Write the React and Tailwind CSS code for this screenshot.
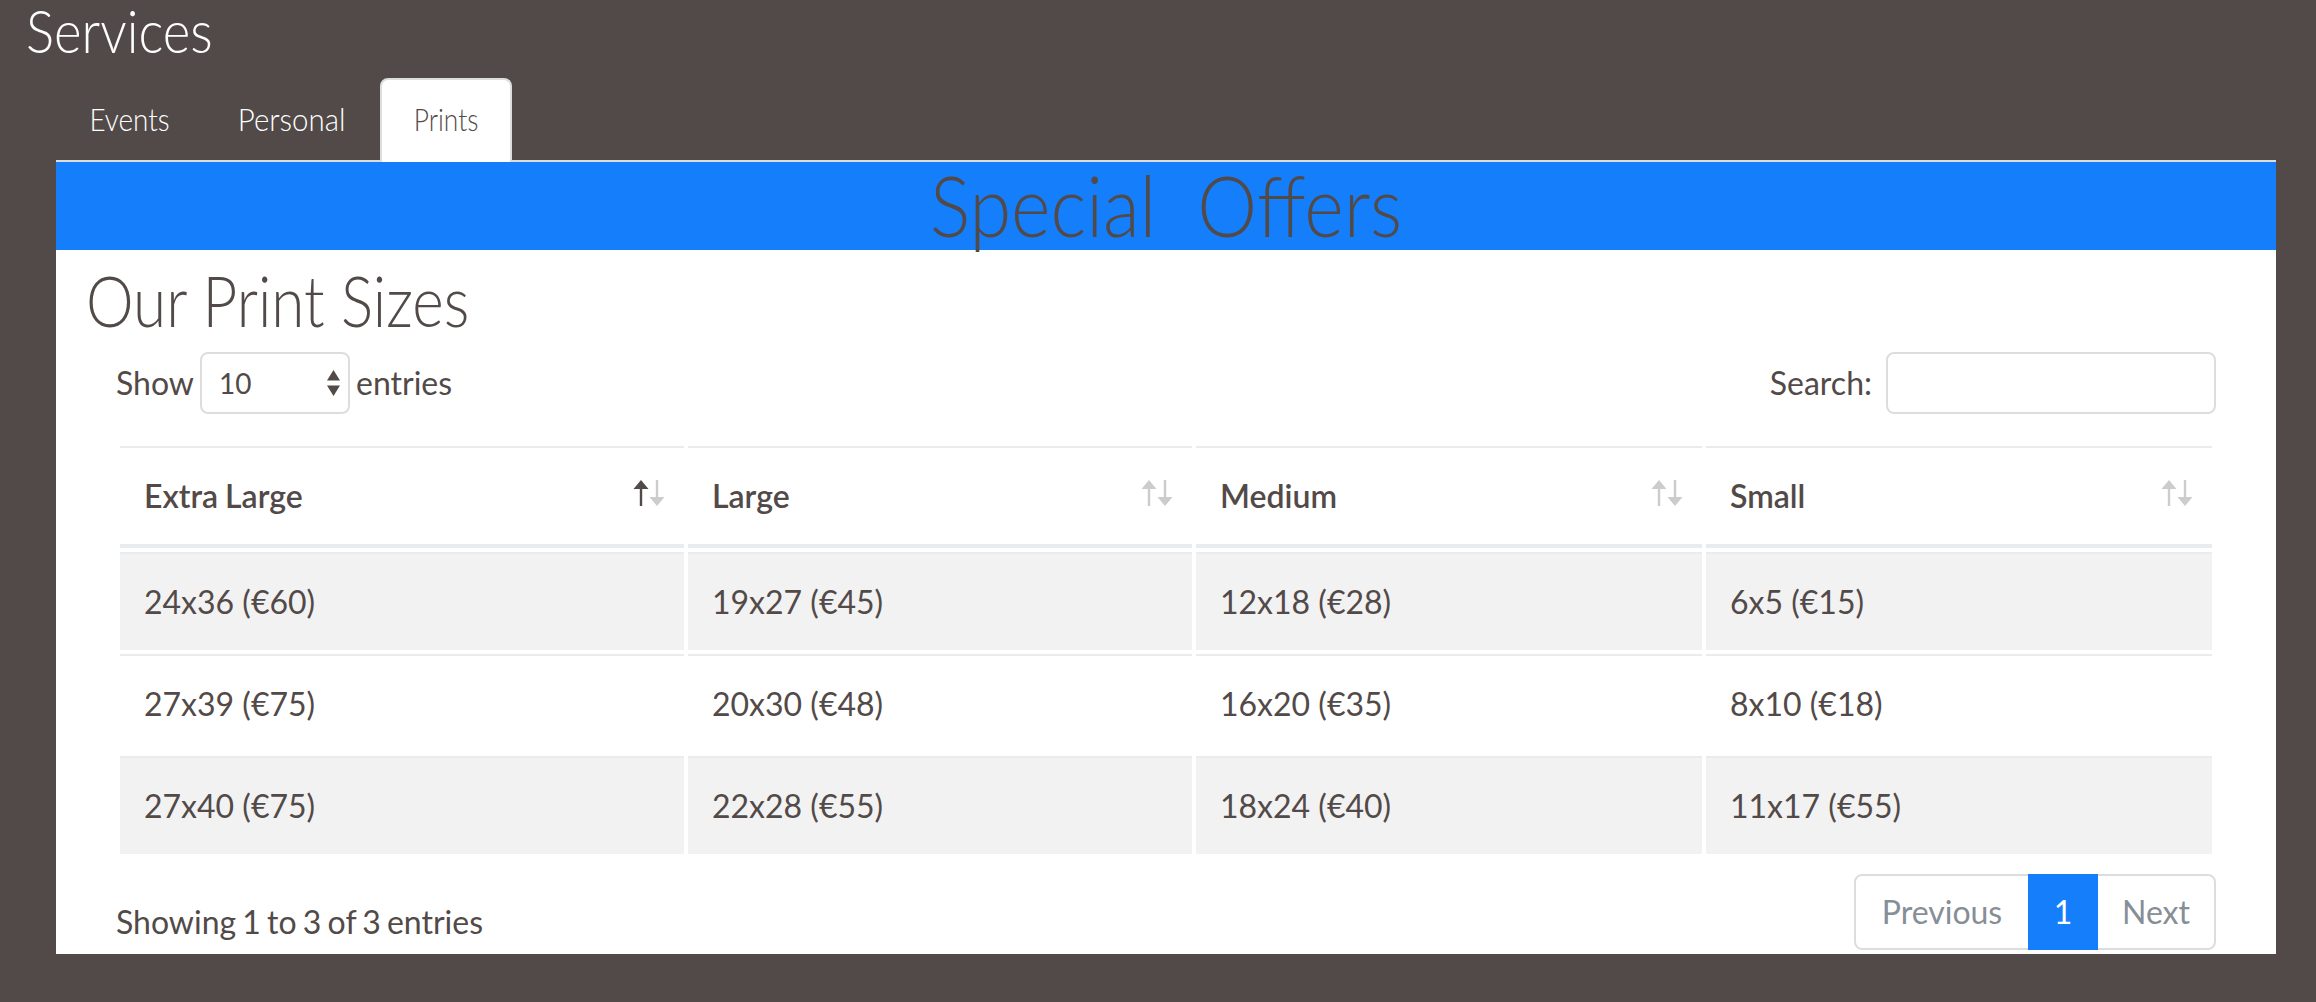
const rows = [
  ['24x36 (€60)', '19x27 (€45)', '12x18 (€28)', '6x5 (€15)'],
  ['27x39 (€75)', '20x30 (€48)', '16x20 (€35)', '8x10 (€18)'],
  ['27x40 (€75)', '22x28 (€55)', '18x24 (€40)', '11x17 (€55)'],
];
const heads = ['Extra Large', 'Large', 'Medium', 'Small'];

function SortIcon({ active }) {
  return (
    <svg className="absolute right-[19px] top-[32px]" width="32" height="26" viewBox="0 0 32 26">
      <path d="M8 0l7.5 9H9.2v17H6.8V9H.5z" fill={active ? '#524a48' : '#cccccc'} />
      <path d="M24 26l-7.5-9h6.3V0h2.4v17h6.3z" fill="#cccccc" />
    </svg>
  );
}

export default function App() {
  return (
    <div className="h-[1002px] bg-[#524a48] font-['Lato',sans-serif] text-[32px] text-[#524a48]">
      <div className="h-[78px] pl-[26px]">
        <h1 className="origin-left scale-x-[0.88] text-[60px] leading-[60px] font-light text-white">Services</h1>
      </div>

      <div className="mr-[40px] ml-[56px] flex h-[84px] border-b-2 border-[#dddddd] text-[31px] font-light">
        <a className="flex w-[147px] justify-center pt-[18px] text-white">
          <span className="scale-x-[0.9]">Events</span>
        </a>
        <a className="flex w-[177px] justify-center pt-[18px] text-white">
          <span className="scale-x-[0.95]">Personal</span>
        </a>
        <a className="flex h-[84px] w-[132px] justify-center rounded-t-lg border-2 border-b-0 border-[#dddddd] bg-white pt-[16px]">
          <span className="scale-x-[0.85]">Prints</span>
        </a>
      </div>

      <div className="mr-[40px] ml-[56px] bg-white">
        <div className="h-[88px] bg-[#157efb] text-center">
          <h2 className="scale-x-[0.9] text-[84px] leading-[86px] font-light whitespace-pre">Special  Offers</h2>
        </div>

        <div className="h-[704px] px-[60px]">
          <div className="h-[102px]">
            <h3 className="-ml-[30px] origin-left scale-x-[0.86] pt-[10px] text-[70px] leading-[80px] font-light whitespace-pre">Our Print Sizes</h3>
          </div>

          <div className="flex h-[62px] items-center justify-between">
            <div className="flex items-center">
              <span>Show</span>
              <div className="relative mx-[6px] h-[62px] w-[150px]">
                <select className="h-full w-full appearance-none rounded-lg border-2 border-[#dddddd] bg-white pl-[17px] text-[28px] outline-none">
                  <option>10</option>
                </select>
                <svg className="absolute top-[18px] left-[127px]" width="13" height="26" viewBox="0 0 13 26">
                  <path d="M6.5 0L13 10.5H0z M6.5 26L0 15.5h13z" fill="#524a48" />
                </svg>
              </div>
              <span>entries</span>
            </div>
            <div className="flex items-center gap-[14px]">
              <span>Search:</span>
              <input className="h-[62px] w-[330px] rounded-lg border-2 border-[#dddddd] bg-white outline-none" />
            </div>
          </div>

          <table className="mt-[28px] w-[2100px] table-fixed border-separate border-spacing-[4px]">
            <colgroup>
              <col className="w-[564px]" />
              <col className="w-[504px]" />
              <col className="w-[506px]" />
              <col className="w-[506px]" />
            </colgroup>
            <thead>
              <tr>
                {heads.map((h, i) => (
                  <th key={h} className="relative h-[102px] border-t-2 border-b-4 border-[#e9ecef] pl-[24px] text-left font-semibold [word-spacing:-1px]">
                    {h}
                    <SortIcon active={i === 0} />
                  </th>
                ))}
              </tr>
            </thead>
            <tbody>
              {rows.map((row, r) => (
                <tr key={r}>
                  {row.map((c) => (
                    <td key={c} className={`h-[98px] border-t-2 border-[#e9ecef] pl-[24px] ${r === 1 ? 'bg-white' : 'bg-[#f2f2f2]'}`}>
                      {c}
                    </td>
                  ))}
                </tr>
              ))}
            </tbody>
          </table>

          <div className="mt-[16px] flex h-[76px] justify-between">
            <div className="pt-[24px] [word-spacing:-2px]">Showing 1 to 3 of 3 entries</div>
            <div className="flex h-[76px] w-[362px] rounded-lg border-2 border-[#dddddd] text-[#868e96]">
              <span className="flex w-[172px] items-center justify-center">Previous</span>
              <span className="-my-[2px] flex w-[70px] items-center justify-center bg-[#157efb] text-white">1</span>
              <span className="flex flex-1 items-center justify-center">Next</span>
            </div>
          </div>
        </div>
      </div>
    </div>
  );
}
